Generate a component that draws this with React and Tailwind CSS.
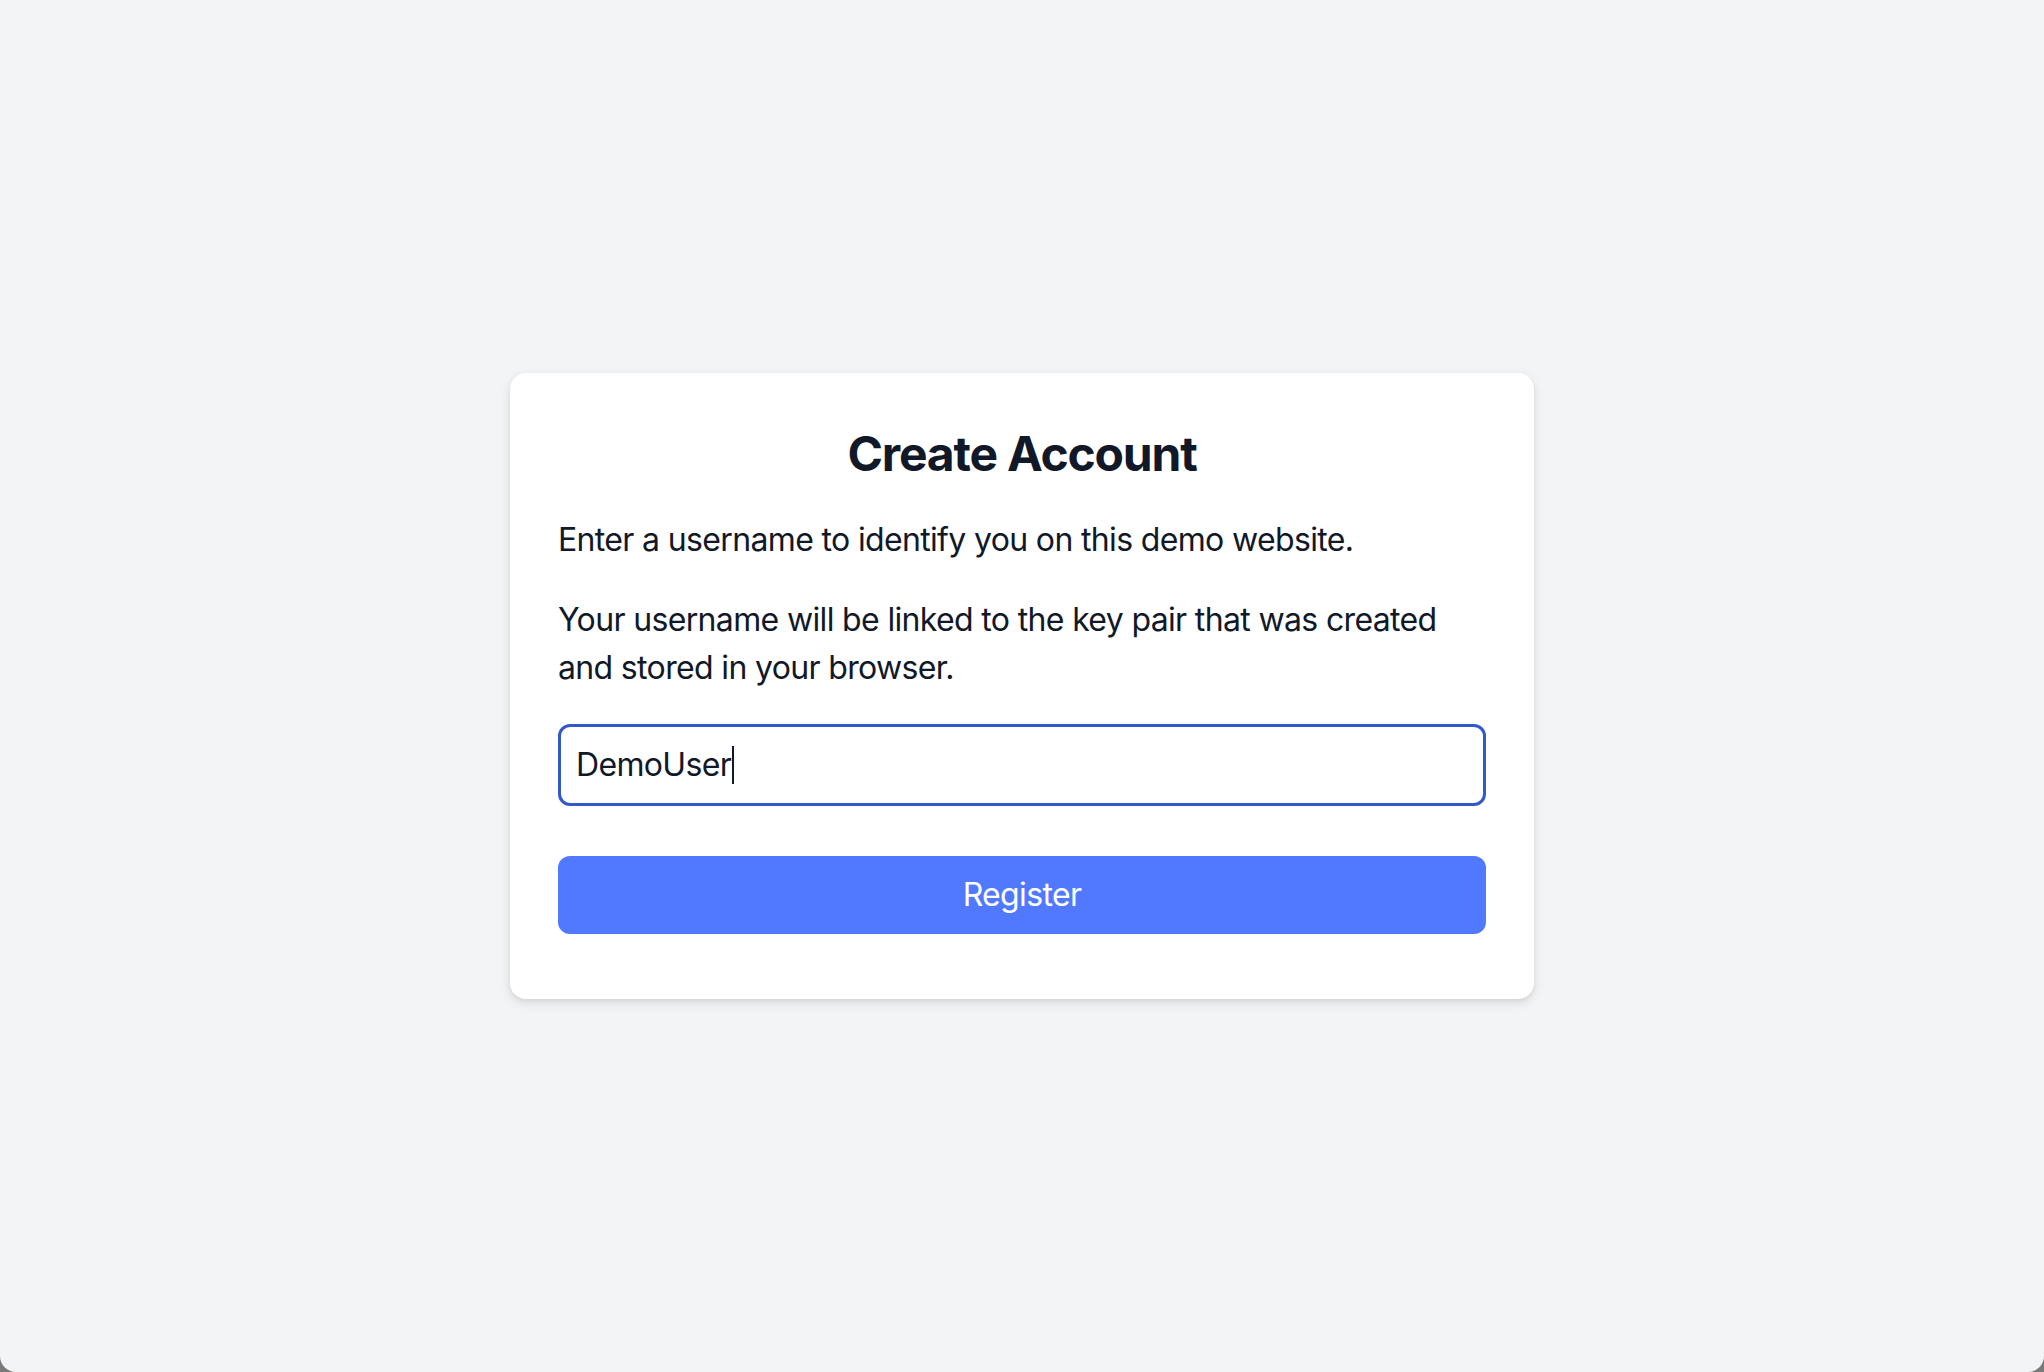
import React from "react";

export default function App() {
  return (
    <div className="w-[2044px] h-[1372px] bg-[#7a7a7a]">
      <div
        className="w-full h-full bg-[#f3f4f6] rounded-b-[16px] flex items-center justify-center"
        style={{ fontFamily: "Inter, 'Noto Sans', sans-serif" }}
      >
        <div className="w-[1024px] bg-white rounded-[16px] shadow-[0_4px_12px_rgba(0,0,0,0.10),0_2px_4px_rgba(0,0,0,0.06)] px-[48px] pt-[49px] pb-[65px] text-[#111827]">
          <h1 className="text-[48px] leading-[64px] font-bold text-center tracking-[-1.2px] mb-[30px]">
            Create Account
          </h1>
          <p className="text-[32px] leading-[48px] mb-[32px] tracking-[-0.65px]">
            Enter a username to identify you on this demo website.
          </p>
          <p className="text-[32px] leading-[48px] mb-[32px] tracking-[-0.65px]">
            Your username will be linked to the key pair that was created and stored in your browser.
          </p>
          <div className="h-[82px] rounded-[12px] border-[3.5px] border-[#3358c9] flex items-center px-[15px] mb-[50px]">
            <span className="text-[32px] leading-[48px] tracking-[-0.65px]">DemoUser</span>
            <span className="w-[1.5px] h-[38px] bg-[#111827] ml-[1px]"></span>
          </div>
          <button className="w-full h-[78px] rounded-[12px] bg-[#5179ff] text-white text-[32px] leading-[48px] tracking-[-0.65px] flex items-center justify-center">
            Register
          </button>
        </div>
      </div>
    </div>
  );
}
